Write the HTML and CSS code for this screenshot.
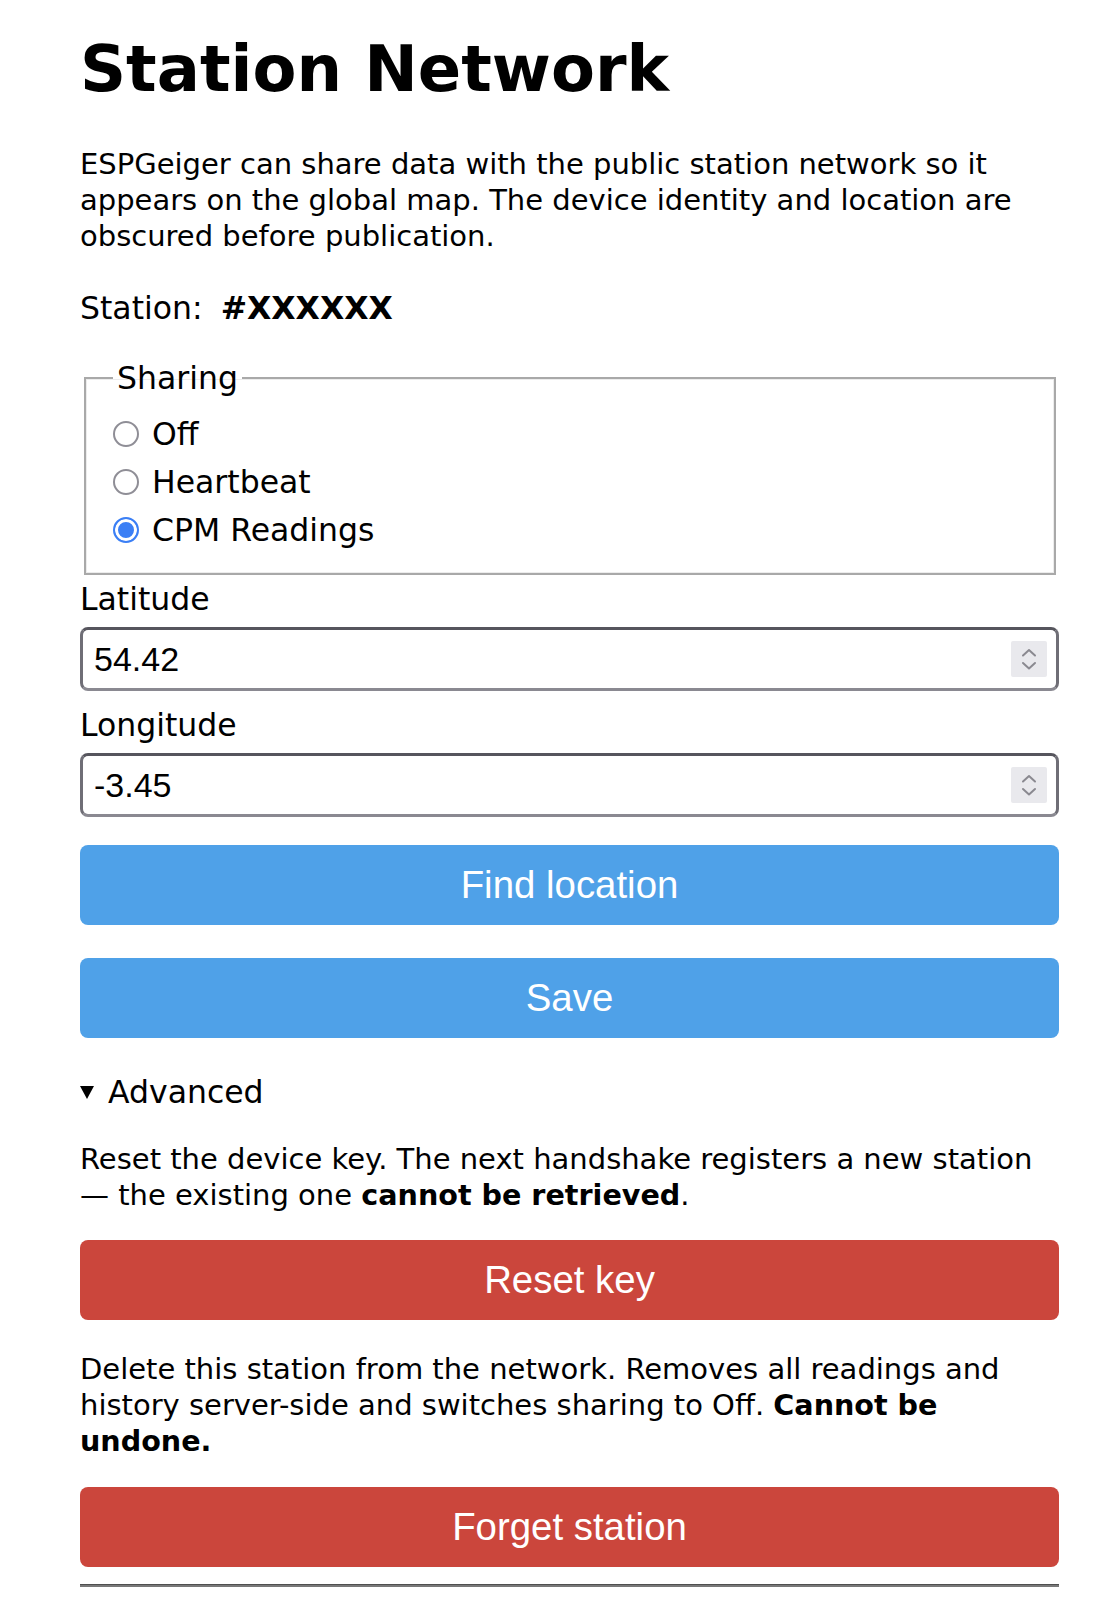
FILE: index.html
```html
<!DOCTYPE html>
<html lang="en">
<head>
    <meta charset="UTF-8">
    <meta name="viewport" content="width=device-width, initial-scale=1.0">
    <title>Station Network</title>
    <link rel="stylesheet" href="styles.css">
</head>

<body>
    <main class="page">
        <h1 class="title">Station Network</h1>

        <p class="intro">ESPGeiger can share data with the public station network so it
        appears on the global map. The device identity and location are
        obscured before publication.</p>

        <p class="station">Station: <b>#XXXXXX</b></p>

        <form class="settings">
            <fieldset class="sharing">
                <legend>Sharing</legend>
                <label class="choice"><input type="radio" name="share" value="0">Off</label>
                <label class="choice"><input type="radio" name="share" value="1">Heartbeat</label>
                <label class="choice"><input type="radio" name="share" value="2" checked>CPM Readings</label>
            </fieldset>

            <label class="field-label" for="lat">Latitude</label>
            <div class="numbox">
                <input id="lat" type="number" step="0.01" value="54.42">
                <span class="spin">
                    <svg width="36" height="36" viewBox="0 0 36 36"><path d="M12 14.5 L18 9 L24 14.5 M12 22 L18 27.5 L24 22"/></svg>
                </span>
            </div>

            <label class="field-label" for="lon">Longitude</label>
            <div class="numbox">
                <input id="lon" type="number" step="0.01" value="-3.45">
                <span class="spin">
                    <svg width="36" height="36" viewBox="0 0 36 36"><path d="M12 14.5 L18 9 L24 14.5 M12 22 L18 27.5 L24 22"/></svg>
                </span>
            </div>

            <button type="button" class="btn btn-find">Find location</button>
            <button type="submit" class="btn btn-save">Save</button>
        </form>

        <details class="advanced" open>
            <summary>Advanced</summary>

            <p class="note note-reset">Reset the device key. The next handshake registers a new station
            &mdash; the existing one <b>cannot be retrieved</b>.</p>
            <button type="button" class="btn btn-danger btn-reset">Reset key</button>

            <p class="note note-forget">Delete this station from the network. Removes all readings and
            history server-side and switches sharing to Off. <b>Cannot be undone.</b></p>
            <button type="button" class="btn btn-danger btn-forget">Forget station</button>
        </details>

        <hr class="rule">
    </main>
</body>
</html>
```

FILE: styles.css
```css
body {
	margin: 0;
	padding: 0;
	background-color: #fff;
	color: #000;
	font-family: "DejaVu Sans", Verdana, sans-serif;
	font-size: 31.5px;
}

.page {
	width: 979px;
	padding-left: 80px;
}

.title {
	margin: 31px 0 0;
	font-size: 64px;
	font-weight: bold;
	line-height: 76px;
}

.intro,
.note {
	margin: 0;
	font-size: 29px;
	line-height: 36px;
}

.note b {
	font-size: 28.6px;
}

.intro {
	margin-top: 39px;
}

.station {
	margin: 36px 0 0;
	line-height: 36px;
}

.station b {
	margin-left: 8px;
}

/* sharing radios */
.sharing {
	margin: 34px 3px 0 4px;
	padding: 14px 20px 19px 27px;
	border: 2px solid #a9a9a9;
	box-shadow: inset 0 0 0 1px #ececec;
}

.sharing legend {
	padding: 0 4px;
	line-height: 36px;
}

.choice {
	display: flex;
	align-items: center;
	gap: 13px;
	height: 48px;
}

.choice input {
	appearance: none;
	-webkit-appearance: none;
	box-sizing: border-box;
	width: 26px;
	height: 26px;
	margin: 0;
	border: 2px solid #8f8e96;
	border-radius: 50%;
	background: #fff;
}

.choice input:checked {
	border: 2px solid #3b7ff5;
	background: #3b7ff5;
	box-shadow: inset 0 0 0 3px #fff;
}

/* coordinates */
.field-label {
	display: block;
	line-height: 36px;
	margin-top: 6px;
}

.numbox + .field-label {
	margin-top: 16px;
}

.numbox {
	display: flex;
	align-items: center;
	box-sizing: border-box;
	height: 64px;
	margin-top: 10px;
	padding: 0 9px 0 11px;
	border: 3px solid #6f6e76;
	border-top-color: #56555d;
	border-bottom-color: #8a8991;
	border-radius: 8px;
}

.numbox input {
	flex: 1;
	min-width: 0;
	border: 0;
	padding: 0;
	outline: none;
	background: transparent;
	color: #000;
	font-family: "Liberation Sans", Arial, sans-serif;
	font-size: 34px;
	-moz-appearance: textfield;
}

.numbox input::-webkit-inner-spin-button,
.numbox input::-webkit-outer-spin-button {
	-webkit-appearance: none;
	margin: 0;
}

.spin {
	display: block;
	width: 36px;
	height: 36px;
	background-color: #e9e9ed;
	border-radius: 2px;
}

.spin svg {
	display: block;
	fill: none;
	stroke: #8a8990;
	stroke-width: 2;
	stroke-linecap: round;
	stroke-linejoin: round;
}

/* buttons */
.btn {
	display: block;
	width: 100%;
	height: 80px;
	border: 0;
	border-radius: 8px;
	background-color: #4fa1e8;
	color: #fff;
	font-family: "Liberation Sans", Arial, sans-serif;
	font-size: 38.4px;
	cursor: pointer;
}

.btn-find {
	margin-top: 28px;
}

.btn-save {
	margin-top: 33px;
}

.btn-danger {
	background-color: #cb463c;
}

/* advanced */
.advanced {
	margin-top: 36px;
}

.advanced summary {
	display: flex;
	align-items: center;
	gap: 14px;
	line-height: 36px;
	list-style: none;
	cursor: pointer;
}

.advanced summary::-webkit-details-marker {
	display: none;
}

.advanced summary::before {
	content: "";
	width: 0;
	height: 0;
	border-left: 7px solid transparent;
	border-right: 7px solid transparent;
	border-top: 13px solid #000;
}

.note-reset {
	margin-top: 31px;
}

.btn-reset {
	margin-top: 27px;
}

.note-forget {
	margin-top: 31px;
}

.btn-forget {
	margin-top: 28px;
}

.rule {
	height: 0;
	margin: 17px 0 0;
	border: 0;
	border-top: 1px solid #4f4f4f;
	border-bottom: 2px solid #787878;
}
```
